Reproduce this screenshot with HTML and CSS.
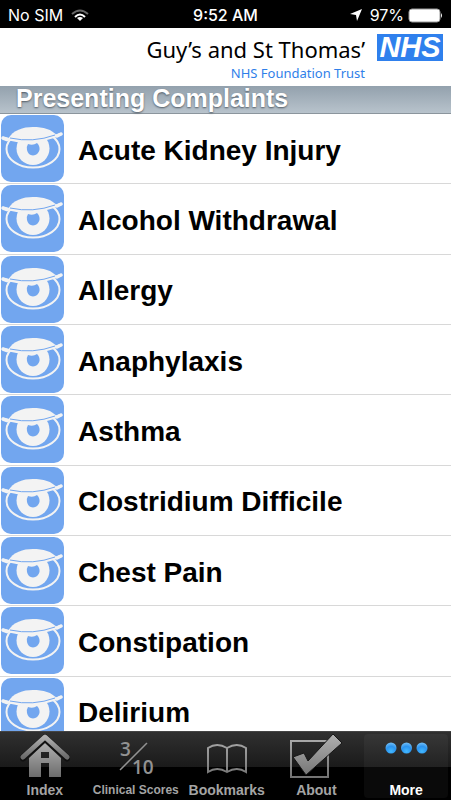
FILE: index.html
```html
<!DOCTYPE html>
<html lang="en">
<head>
<meta charset="utf-8">
<meta name="viewport" content="width=device-width, initial-scale=1">
<title>Presenting Complaints</title>
<link rel="stylesheet" href="styles.css">
</head>
<body>
<svg class="defs" aria-hidden="true">
  <defs>
    <linearGradient id="metal" x1="0" y1="0" x2="0" y2="1">
      <stop offset="0" stop-color="#b0b0b0"/>
      <stop offset="1" stop-color="#6c6c6c"/>
    </linearGradient>
    <linearGradient id="metal-space" gradientUnits="userSpaceOnUse" x1="0" y1="0" x2="0" y2="46">
      <stop offset="0" stop-color="#b0b0b0"/>
      <stop offset="1" stop-color="#707070"/>
    </linearGradient>
    <radialGradient id="dot" cx="50%" cy="80%" r="75%">
      <stop offset="0" stop-color="#42b8ff"/>
      <stop offset="0.6" stop-color="#2b93ee"/>
      <stop offset="1" stop-color="#6ab9f4"/>
    </radialGradient>
  </defs>
  <symbol id="eye" viewBox="0 0 63 67">
    <ellipse cx="32" cy="34" rx="26.500" ry="18.500" fill="none" stroke="#f3f3f3" stroke-width="2"/>
    <circle cx="32" cy="33.500" r="16.500" fill="#f3f3f3"/>
    <path d="M7 24C12 15 22 12 32 12C42 12 51 14 56 21Q32 29 7 24Z" fill="#f3f3f3"/>
    <path d="M2 23Q32 31 60 19" fill="none" stroke="#f3f3f3" stroke-width="2.500"/>
    <path d="M9 23Q32 28 54 20" fill="none" stroke="#72a6ef" stroke-width="1"/>
    <path d="M2 23L6 24.500M56 21L60 19" stroke="#f3f3f3" stroke-width="3.500" stroke-linecap="round"/>
    <path d="M27 29Q32 31 36 28Q39 31 38.500 35Q37 40 32 40.500Q27 40 26 35Q25.500 31 27 29Z" fill="#72a6ef"/>
  </symbol>
</svg>
<div class="app">
  <div class="status">
    <div class="carrier"><span>No SIM</span>
      <svg width="18" height="13" viewBox="0 0 18 13" role="img" aria-label="Wi-Fi" fill="none" stroke-width="2">
        <path d="M1 5Q9 -2 17 5" stroke="#686868"/>
        <path d="M4 8Q9 3 14 8" stroke="#fff"/>
        <path d="M6 9Q9 7 12 9L9 12Z" fill="#fff" stroke="none"/>
      </svg>
    </div>
    <span class="time">9:52 AM</span>
    <div class="power">
      <svg width="12" height="12" viewBox="0 0 12 12" role="img" aria-label="Location"><path d="M12 0L7 12L6 6L0 5Z" fill="#fff"/></svg>
      <span>97%</span>
      <svg width="35" height="15" viewBox="0 0 35 15" role="img" aria-label="Battery"><rect x="1" y="1" width="31" height="13" rx="3" fill="#fff" stroke="#999"/><path d="M33 5Q35 7.500 33 10Z" fill="#fff"/></svg>
    </div>
  </div>
  <header class="brand">
    <div class="trust">
      <span class="trust-name">Guy’s and St Thomas’</span>
      <span class="trust-sub">NHS Foundation Trust</span>
    </div>
    <span class="nhs">NHS</span>
  </header>
  <h1 class="title">Presenting Complaints</h1>
  <main class="content">
    <ul class="list">
      <li><a href="#"><svg class="eye"><use href="#eye"/></svg>Acute Kidney Injury</a></li>
      <li><a href="#"><svg class="eye"><use href="#eye"/></svg>Alcohol Withdrawal</a></li>
      <li><a href="#"><svg class="eye"><use href="#eye"/></svg>Allergy</a></li>
      <li><a href="#"><svg class="eye"><use href="#eye"/></svg>Anaphylaxis</a></li>
      <li><a href="#"><svg class="eye"><use href="#eye"/></svg>Asthma</a></li>
      <li><a href="#"><svg class="eye"><use href="#eye"/></svg>Clostridium Difficile</a></li>
      <li><a href="#"><svg class="eye"><use href="#eye"/></svg>Chest Pain</a></li>
      <li><a href="#"><svg class="eye"><use href="#eye"/></svg>Constipation</a></li>
      <li><a href="#"><svg class="eye"><use href="#eye"/></svg>Delirium</a></li>
    </ul>
  </main>
  <nav class="tabs">
    <a href="#">
      <svg width="50" height="46" viewBox="0 0 50 46">
        <path d="M9 24L25 9L41 24V43H29V29H21V43H9ZM21 18V24H29V18Z" fill="url(#metal)" fill-rule="evenodd"/>
        <path d="M3 24L25 4L47 24" fill="none" stroke="#111" stroke-width="7" stroke-linecap="round"/>
        <path d="M3 23L25 3L47 23" fill="none" stroke="url(#metal)" stroke-width="5" stroke-linecap="round" stroke-linejoin="round"/>
      </svg>
      <span>Index</span>
    </a>
    <a href="#">
      <svg width="36" height="46" viewBox="0 0 36 46" class="score">
        <text x="2" y="22">3</text><text x="14" y="40">10</text>
        <path d="M2 36L29 9" stroke="#929292" stroke-width="1.500"/>
      </svg>
      <span class="snug">Clinical Scores</span>
    </a>
    <a href="#">
      <svg width="42" height="46" viewBox="0 0 42 46">
        <path d="M2 38V14Q11 8 21 14Q31 8 40 14V38Q31 32 21 38Q11 32 2 38ZM21 14V38" fill="none" stroke="url(#metal-space)" stroke-width="2"/>
      </svg>
      <span>Bookmarks</span>
    </a>
    <a href="#">
      <svg width="54" height="46" viewBox="0 0 54 46">
        <rect x="2" y="7" width="37" height="36" fill="none" stroke="url(#metal-space)" stroke-width="2"/>
        <path d="M4 23L15 19L19 27L44 0L53 9L17 41Z" fill="url(#metal-space)" stroke="#161616"/>
      </svg>
      <span>About</span>
    </a>
    <a href="#" class="active" aria-current="page">
      <svg width="44" height="46" viewBox="0 0 44 46">
        <g fill="url(#dot)"><circle cx="7" cy="14" r="5.500"/><circle cx="22.500" cy="14" r="5.500"/><circle cx="38" cy="14" r="5.500"/></g>
      </svg>
      <span>More</span>
    </a>
  </nav>
</div>
</body>
</html>
```
FILE: styles.css
```css
* { box-sizing: border-box; }

body {
  margin: 0;
  background: #fff;
  color: #000;
  font-family: "Liberation Sans", Arial, sans-serif;
}

a { color: inherit; text-decoration: none; }

.defs { position: absolute; width: 0; height: 0; }

.app {
  display: flex;
  flex-direction: column;
  height: 100vh;
}

.status {
  display: grid;
  grid-template-columns: 1fr auto 1fr;
  align-items: center;
  height: 28px;
  padding: 2px 8px 0;
  background: #000;
  color: #fff;
  font: 16px/24px Inter, Roboto, sans-serif;
}

.carrier, .power { display: flex; align-items: center; gap: 8px; }
.power { justify-content: flex-end; gap: 4px; }
.power svg:first-child { margin-right: 4px; }
.time { font-weight: 500; }

.brand {
  display: flex;
  justify-content: flex-end;
  align-items: flex-start;
  gap: 12px;
  height: 58px;
  padding: 6px 8px 0;
}

.trust {
  display: flex;
  flex-direction: column;
  align-items: flex-end;
  font-family: "Noto Sans", "Open Sans", sans-serif;
}

.trust-name { font-size: 22px; line-height: 30px; }
.trust-sub { color: #2f7fe9; font-size: 13px; line-height: 18px; }

.nhs {
  width: 66px;
  height: 27px;
  background: #2f80ed;
  color: #fff;
  font-size: 29px;
  font-weight: bold;
  font-style: italic;
  line-height: 27px;
  text-align: center;
}

.title {
  height: 28px;
  margin: 0;
  padding-left: 16px;
  border-bottom: 1px solid #8b959d;
  background: linear-gradient(#93a1ad, #b8c3cc);
  color: #fff;
  font-size: 25px;
  line-height: 25px;
  text-shadow: 0 1px 2px #505a64;
}

.content { flex: 1; min-height: 0; overflow: hidden; }

/* The last row runs on beneath the tab bar. */
.list {
  display: grid;
  grid-template-rows: repeat(9, minmax(0, 1fr));
  height: calc(100% + 16px);
  margin: 0;
  padding: 0;
  list-style: none;
}

.list li { border-bottom: 1px solid #d8d8d8; }

.list a {
  display: flex;
  align-items: center;
  gap: 14px;
  height: 100%;
  padding: 4px 0 0 1px;
  font-size: 28px;
  font-weight: bold;
  line-height: 32px;
}

.eye {
  width: 63px;
  height: 67px;
  margin-top: -4px;
  border-radius: 10px;
  background: #72a6ef;
}

.tabs {
  display: grid;
  grid-template-columns: repeat(5, 1fr);
  height: 69px;
  border-top: 1px solid #444;
  background: linear-gradient(#303030, #1a1a1a 35px, #000 35px);
  color: #a4a4a4;
  font-size: 14px;
  font-weight: bold;
  line-height: 16px;
}

.tabs a {
  display: flex;
  flex-direction: column;
  align-items: center;
  gap: 2px;
  margin: 2px 3px;
  white-space: nowrap;
}

.tabs .snug { font-size: 12px; }
.tabs .active { border-radius: 4px; background: rgba(255, 255, 255, 0.04); color: #fff; }

.score { fill: #929292; font: 600 19px "Open Sans", sans-serif; }
```
